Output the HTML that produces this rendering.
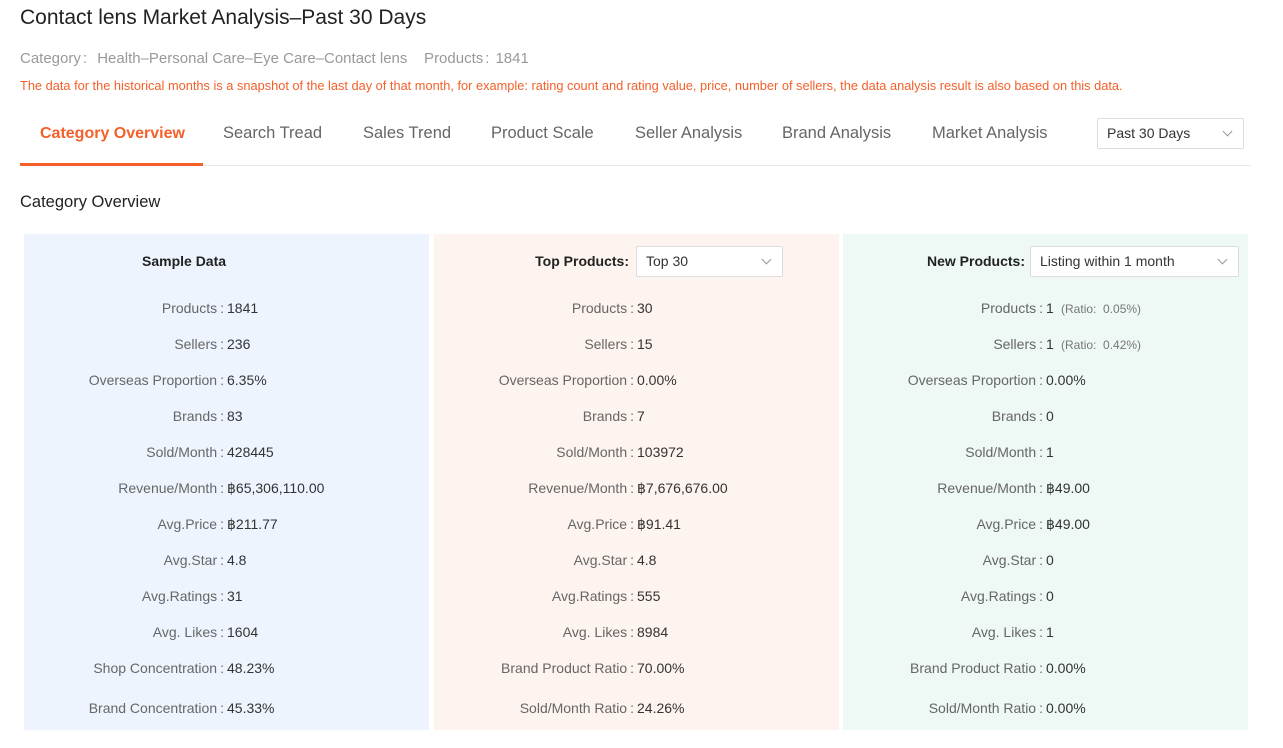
<!DOCTYPE html>
<html><head><meta charset="utf-8"><style>
body{margin:0;width:1283px;height:748px;background:#fff;font-family:"Liberation Sans",sans-serif;position:relative;overflow:hidden}
.a{position:absolute;white-space:nowrap}
.k{margin-left:2px;margin-right:6px}
.tab{position:absolute;top:124px;font-size:16.5px;color:#666}
.panel{position:absolute;top:234px;width:405px;height:496px}
.row{position:absolute;left:0;width:405px;height:20px;font-size:14px;line-height:20px}
.row .l{position:absolute;right:205px;color:#666;text-align:right}
.row .v{position:absolute;left:203px;color:#333}
.sm{font-size:12px;color:#777}
.sel{position:absolute;background:#fff;border:1px solid #ddd;border-radius:2px;font-size:14px;color:#333;box-sizing:border-box;padding-left:9px;line-height:29px;height:31px}
.chev{position:absolute;right:12px;top:9px;width:6px;height:6px;border-right:1px solid #999;border-bottom:1px solid #999;transform:rotate(45deg)}
</style></head><body>
<div class="a" style="left:20px;top:6px;font-size:21px;color:#222">Contact lens Market Analysis–Past 30 Days</div>
<div class="a" style="left:20px;top:50px;font-size:15px;color:#999">Category<span class="k">:</span> Health–Personal Care–Eye Care–Contact lens &nbsp;&nbsp; Products<span class="k">:</span>1841</div>
<div class="a" style="left:20px;top:78px;font-size:12.8px;color:#f5602a">The data for the historical months is a snapshot of the last day of that month, for example: rating count and rating value, price, number of sellers, the data analysis result is also based on this data.</div>
<div class="tab" style="left:40px;color:#f5602a;font-weight:bold;font-size:16px;top:125px">Category Overview</div>
<div class="tab" style="left:223px">Search Tread</div>
<div class="tab" style="left:363px">Sales Trend</div>
<div class="tab" style="left:491px">Product Scale</div>
<div class="tab" style="left:635px">Seller Analysis</div>
<div class="tab" style="left:782px">Brand Analysis</div>
<div class="tab" style="left:932px">Market Analysis</div>
<div class="a" style="left:20px;top:165px;width:1231px;height:1px;background:#e8e8e8"></div>
<div class="a" style="left:20px;top:163px;width:183px;height:3px;background:#f5602a"></div>
<div class="sel" style="left:1097px;top:118px;width:147px">Past 30 Days<span class="chev"></span></div>
<div class="a" style="left:20px;top:193px;font-size:16.5px;color:#222">Category Overview</div>

<div class="panel" style="left:24px;background:#eef4fe">
<div class="a" style="left:118px;top:19px;font-size:14px;font-weight:bold;color:#222">Sample Data</div>
</div>
<div class="panel" style="left:434px;background:#fdf3ef">
<div class="a" style="right:210px;top:19px;font-size:14px;font-weight:bold;color:#222">Top Products:</div>
<div class="sel" style="left:202px;top:12px;width:147px">Top 30<span class="chev"></span></div>
</div>
<div class="panel" style="left:843px;background:#eef8f4">
<div class="a" style="right:223px;top:19px;font-size:14px;font-weight:bold;color:#222">New Products:</div>
<div class="sel" style="left:187px;top:12px;width:209px">Listing within 1 month<span class="chev"></span></div>
</div>

<script>
var labels=["Products","Sellers","Overseas Proportion","Brands","Sold/Month","Revenue/Month","Avg.Price","Avg.Star","Avg.Ratings","Avg. Likes","Shop Concentration","Brand Concentration"];
var labels2=labels.slice();labels2[10]="Brand Product Ratio";labels2[11]="Sold/Month Ratio";
var v=[["1841","236","6.35%","83","428445","฿65,306,110.00","฿211.77","4.8","31","1604","48.23%","45.33%"],
["30","15","0.00%","7","103972","฿7,676,676.00","฿91.41","4.8","555","8984","70.00%","24.26%"],
["1 <span class='sm'>&nbsp;(Ratio:&nbsp; 0.05%)</span>","1 <span class='sm'>&nbsp;(Ratio:&nbsp; 0.42%)</span>","0.00%","0","1","฿49.00","฿49.00","0","0","1","0.00%","0.00%"]];
var ps=document.querySelectorAll('.panel');
for(var p=0;p<3;p++){for(var i=0;i<12;i++){var y=64+i*36+(i==11?4:0);var d=document.createElement('div');d.className='row';d.style.top=y+'px';
d.innerHTML='<span class="l">'+(p==0?labels[i]:labels2[i])+'<span style="margin-left:3px">:</span></span><span class="v">'+v[p][i]+'</span>';ps[p].appendChild(d);}}
</script>
</body></html>
